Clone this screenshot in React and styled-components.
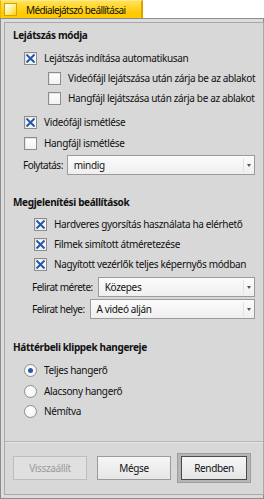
import React from "react";
import styled, { createGlobalStyle } from "styled-components";

const Global = createGlobalStyle`
  html, body { margin: 0; padding: 0; background: #ffffff; }
  body {
    font-family: "Noto Sans", "DejaVu Sans", sans-serif;
    font-size: 10px;
    color: #111;
    letter-spacing: -0.35px;
    white-space: nowrap;
  }
`;

const Window = styled.div`
  width: 264px;
  height: 499px;
  display: flex;
  flex-direction: column;
`;

const Tab = styled.div`
  width: 143px;
  height: 18px;
  box-sizing: border-box;
  display: flex;
  align-items: center;
  gap: 9px;
  padding-left: 3px;
  background: linear-gradient(#ffe25a, #ffcb00 70%);
  border-left: 1px solid #e8b400;
  border-right: 2px solid #d9a400;
  border-top: 1px solid #ffe98a;
  font-size: 10px;
  letter-spacing: -0.6px;
`;

const CloseBox = styled.div`
  width: 13px;
  height: 13px;
  box-sizing: border-box;
  border: 1px solid #d2a200;
  background: linear-gradient(135deg, #ffffff 0%, #fff2a8 45%, #ffd200 100%);
`;

const Frame = styled.div`
  flex: 1;
  display: flex;
  box-sizing: border-box;
  border: 1px solid #8d8d8d;
  background: #dcdcdc;
  padding: 3px;
`;

const Panel = styled.div`
  flex: 1;
  display: flex;
  flex-direction: column;
  box-sizing: border-box;
  border: 1px solid #a9a9a9;
  background: #d8d8d8;
  padding: 0 8px 0 8px;
`;

const Heading = styled.div`
  font-weight: 700;
  line-height: 14px;
  height: 14px;
  margin-top: ${(p) => p.$top}px;
  margin-bottom: ${(p) => p.$bottom}px;
`;

const Row = styled.label`
  display: flex;
  align-items: center;
  height: 20px;
  gap: 7px;
  padding-left: ${(p) => p.$indent}px;
  margin-top: ${(p) => p.$top || 0}px;
`;

const Box = styled.span`
  width: 13px;
  height: 13px;
  box-sizing: border-box;
  border: 1px solid #8c8c8c;
  background: linear-gradient(#ffffff, #f2f2f2);
  box-shadow: inset 1px 1px 0 #e4e4e4;
  display: flex;
  align-items: center;
  justify-content: center;
  flex-shrink: 0;
`;

const Radio = styled.span`
  width: 13px;
  height: 13px;
  box-sizing: border-box;
  border: 1px solid #8f8f8f;
  border-radius: 50%;
  background: radial-gradient(circle at 40% 40%, #ffffff, #f0f0f0);
  display: flex;
  align-items: center;
  justify-content: center;
  flex-shrink: 0;
  &::after {
    content: "";
    width: 5px;
    height: 5px;
    border-radius: 50%;
    background: ${(p) => (p.$on ? "#2a5aa6" : "transparent")};
  }
`;

const FieldRow = styled.div`
  display: flex;
  align-items: center;
  gap: ${(p) => p.$gap}px;
  padding-left: ${(p) => p.$indent}px;
  margin-top: ${(p) => p.$top}px;
`;

const FieldLabel = styled.span`
  letter-spacing: -0.5px;
`;

const Popup = styled.div`
  flex: 1;
  height: 20px;
  box-sizing: border-box;
  border: 1px solid #9b9b9b;
  background: linear-gradient(#fbfbfb, #efefef);
  display: flex;
  align-items: center;
  padding-left: 6px;
  position: relative;
  &::before {
    content: "";
    position: absolute;
    right: 10px;
    top: 2px;
    bottom: 2px;
    border-left: 1px solid #e2e2e2;
  }
  &::after {
    content: "";
    position: absolute;
    right: 3px;
    top: 8px;
    border-left: 2.5px solid transparent;
    border-right: 2.5px solid transparent;
    border-top: 3px solid #555;
  }
`;

const Spacer = styled.div`
  flex: 1;
`;

const Separator = styled.div`
  margin: 0 -8px;
  border-top: 1px solid #b4b4b4;
  border-bottom: 1px solid #e6e6e6;
`;

const ButtonBar = styled.div`
  display: flex;
  align-items: center;
  padding: 10px 0 11px;
`;

const Button = styled.button`
  width: 74px;
  height: 24px;
  box-sizing: border-box;
  font: inherit;
  letter-spacing: inherit;
  border: 1px solid ${(p) => (p.disabled ? "#bdbdbd" : "#9a9a9a")};
  background: ${(p) =>
    p.disabled ? "#e0e0e0" : "linear-gradient(#f6f6f6, #e6e6e6)"};
  color: ${(p) => (p.disabled ? "#9a9a9a" : "#111")};
  padding: 0;
  margin-left: ${(p) => p.$gap}px;
`;

const DefaultRing = styled.div`
  margin-left: 6px;
  padding: 2px 3px;
  border: 1px solid #9f9f9f;
  background: #b6b6b6;
  display: flex;
`;

const DefaultButton = styled(Button)`
  width: 66px;
  height: 24px;
  border: 1px solid #4a4a4a;
  margin: 0;
`;

function Check({ on }) {
  return (
    <Box>
      {on && (
        <svg width="9" height="9" viewBox="0 0 9 9">
          <path d="M1.2 1.2 L7.8 7.8 M7.8 1.2 L1.2 7.8" stroke="#2458a8" strokeWidth="2" strokeLinecap="square" />
        </svg>
      )}
    </Box>
  );
}

function CheckRow({ on, indent, top, children }) {
  return (
    <Row $indent={indent} $top={top}>
      <Check on={on} />
      <span>{children}</span>
    </Row>
  );
}

export default function App() {
  return (
    <>
      <Global />
      <Window>
        <Tab>
          <CloseBox />
          <span>Médialejátszó beállításai</span>
        </Tab>
        <Frame>
          <Panel>
            <Heading $top={5} $bottom={6}>Lejátszás módja</Heading>
            <CheckRow on indent={11}>Lejátszás indítása automatikusan</CheckRow>
            <CheckRow indent={35}>Videófájl lejátszása után zárja be az ablakot</CheckRow>
            <CheckRow indent={35}>Hangfájl lejátszása után zárja be az ablakot</CheckRow>
            <CheckRow on indent={11} top={4}>Videófájl ismétlése</CheckRow>
            <CheckRow indent={11} top={1}>Hangfájl ismétlése</CheckRow>
            <FieldRow $indent={10} $top={2} $gap={4}>
              <FieldLabel>Folytatás:</FieldLabel>
              <Popup>mindig</Popup>
            </FieldRow>

            <Heading $top={20} $bottom={5}>Megjelenítési beállítások</Heading>
            <CheckRow on indent={21}>Hardveres gyorsítás használata ha elérhető</CheckRow>
            <CheckRow on indent={21}>Filmek simított átméretezése</CheckRow>
            <CheckRow on indent={21}>Nagyított vezérlők teljes képernyős módban</CheckRow>
            <FieldRow $indent={19} $top={3} $gap={5}>
              <FieldLabel>Felirat mérete:</FieldLabel>
              <Popup>Közepes</Popup>
            </FieldRow>
            <FieldRow $indent={19} $top={2} $gap={5}>
              <FieldLabel>Felirat helye:</FieldLabel>
              <Popup>A videó alján</Popup>
            </FieldRow>

            <Heading $top={21} $bottom={6}>Háttérbeli klippek hangereje</Heading>
            <Row $indent={11}>
              <Radio $on />
              <span>Teljes hangerő</span>
            </Row>
            <Row $indent={11} $top={1}>
              <Radio />
              <span>Alacsony hangerő</span>
            </Row>
            <Row $indent={11}>
              <Radio />
              <span>Némítva</span>
            </Row>

            <Spacer />
            <Separator />
            <ButtonBar>
              <Button disabled $gap={0}>Visszaállít</Button>
              <Button $gap={10}>Mégse</Button>
              <DefaultRing>
                <DefaultButton>Rendben</DefaultButton>
              </DefaultRing>
            </ButtonBar>
          </Panel>
        </Frame>
      </Window>
    </>
  );
}
